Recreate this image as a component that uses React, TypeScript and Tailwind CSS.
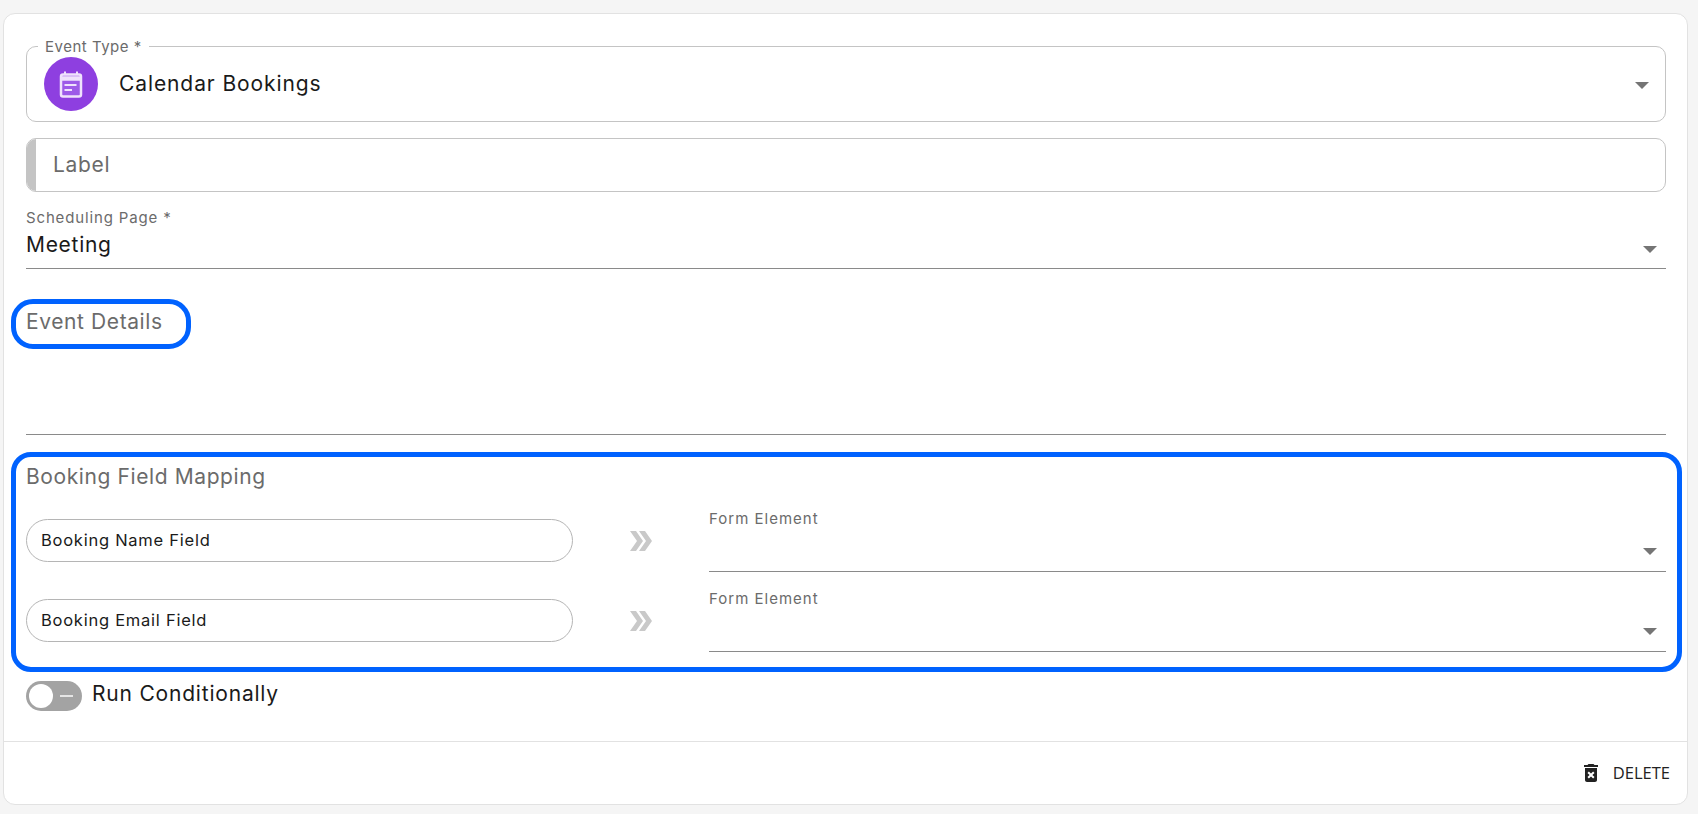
const font = "[font-family:Inter,'Liberation_Sans',sans-serif]";

const Caret = ({className}: {className: string}) => (
    <span className={`absolute w-0 h-0 border-x-[7px] border-x-transparent border-t-[7px] border-t-[#757575] ${className}`}/>
);

const CalendarIcon = () => (
    <svg width="28" height="30" viewBox="0 0 28 30" fill="none">
        <rect x="4" y="5.5" width="20" height="22" rx="2" fill="#9d5ae8" stroke="#efe2fc" strokeWidth="2.5"/>
        <path d="M3 9.5h22" stroke="#efe2fc" strokeWidth="4.5"/>
        <path d="M8 2.5v3M20 2.5v3" stroke="#efe2fc" strokeWidth="2"/>
        <path d="M7.5 16h12M7.5 21h7.5" stroke="#efe2fc" strokeWidth="2.2"/>
    </svg>
);

const Chevrons = () => (
    <svg width="22" height="20" viewBox="0 0 22 20" fill="#c9c9c9">
        <path d="M0 0h6l7 10-7 10H0l7-10z"/>
        <path d="M9 0h6l7 10-7 10H9l7-10z"/>
    </svg>
);

const MappingRow = ({name}: {name: string}) => (
    <div className="flex items-start">
        <div className="w-[547px] h-[43px] mt-[7px] border border-[#b5b5b5] rounded-full flex items-center pl-[14px] text-[16.5px] text-[#1a1a1a] tracking-[0.75px]">
            {name}
        </div>
        <div className="w-[136px] pl-[57px] pt-[19px]">
            <Chevrons/>
        </div>
        <div className="relative flex-1 h-[60px] border-b border-[#8a8a8a]">
            <p className="-mt-[3px] text-[15px] leading-[20px] text-[#6b6b6b] tracking-[1px]">Form Element</p>
            <Caret className="right-[9px] top-[36px]"/>
        </div>
    </div>
);

const App = () => {
    return (
        <div className={`${font} h-[814px] bg-[#f5f5f5] pt-[13px] pl-[3px] pr-[10px] pb-[9px]`}>
            <div className="h-full flex flex-col bg-white border border-[#e2e2e2] rounded-[12px]">
                <div className="flex-1 pl-[22px] pr-[21px] pt-[32px]">
                    <div className="relative h-[76px] border border-[#c4c4c4] rounded-[10px] flex items-center pl-[17px]">
                        <span className="absolute left-[11px] -top-[9px] px-[7px] bg-white text-[15px] leading-[18px] text-[#6b6b6b] tracking-[0.5px]">Event Type *</span>
                        <div className="w-[54px] h-[54px] rounded-full bg-[#8e3fe0] flex items-center justify-center">
                            <CalendarIcon/>
                        </div>
                        <span className="ml-[21px] text-[21px] text-[#1a1a1a] tracking-[0.9px]">Calendar Bookings</span>
                        <Caret className="right-[16px] top-[35px]"/>
                    </div>

                    <div className="mt-[16px] h-[54px] border border-[#c4c4c4] rounded-[10px] overflow-hidden flex items-center">
                        <span className="w-[9px] h-full bg-[#c4c4c4]"/>
                        <span className="ml-[17px] text-[21px] text-[#6b6b6b] tracking-[0.7px]">Label</span>
                    </div>

                    <div className="relative mt-[14px] h-[63px] border-b border-[#8a8a8a]">
                        <p className="pt-[2px] text-[15px] leading-[20px] text-[#6b6b6b] tracking-[0.85px]">Scheduling Page *</p>
                        <p className="pt-[1px] text-[21px] leading-[31px] text-[#1a1a1a] tracking-[0.7px]">Meeting</p>
                        <Caret className="right-[9px] top-[40px]"/>
                    </div>

                    <div className="mt-[30px] -ml-[15px] w-[180px] h-[50px] border-[5px] border-[#0062ff] rounded-[22px] flex items-center pl-[10px] pb-[4px] text-[21px] text-[#6b6b6b] tracking-[0.6px]">
                        Event Details
                    </div>

                    <div className="h-[86px] border-b border-[#8a8a8a]"/>

                    <div className="mt-[17px] -ml-[15px] -mr-[16px] h-[220px] border-[5px] border-[#0062ff] rounded-[20px] pl-[10px] pr-[11px]">
                        <p className="mt-[5px] text-[21px] leading-[30px] text-[#6b6b6b] tracking-[0.6px]">Booking Field Mapping</p>
                        <div className="mt-[20px] flex flex-col gap-[20px]">
                            <MappingRow name="Booking Name Field"/>
                            <MappingRow name="Booking Email Field"/>
                        </div>
                    </div>

                    <div className="mt-[6px] flex items-center">
                        <div className="relative w-[56px] h-[30px] rounded-full bg-[#a3a3a3]">
                            <span className="absolute left-[3px] top-[3px] w-[24px] h-[24px] rounded-full bg-white"/>
                            <span className="absolute right-[9px] top-[14px] w-[13px] h-[2px] bg-[#e5e5e5]"/>
                        </div>
                        <span className="ml-[10px] pb-[4px] text-[21px] text-[#1a1a1a] tracking-[0.8px]">Run Conditionally</span>
                    </div>
                </div>

                <div className="h-[63px] border-t border-[#e2e2e2] flex items-center justify-end pr-[17px]">
                    <svg width="24" height="24" viewBox="0 0 24 24" fill="#222">
                        <path d="M6 19c0 1.1.9 2 2 2h8c1.1 0 2-.9 2-2V7H6v12zm2.46-7.12 1.41-1.41L12 12.59l2.12-2.12 1.41 1.41L13.41 14l2.12 2.12-1.41 1.41L12 15.41l-2.12 2.12-1.41-1.41L10.59 14l-2.13-2.12zM15.5 4l-1-1h-5l-1 1H5v2h14V4z"/>
                    </svg>
                    <span className="ml-[10px] text-[16.5px] font-medium text-[#222] [font-family:'Open_Sans',sans-serif]">DELETE</span>
                </div>
            </div>
        </div>
    );
};

export default App;
